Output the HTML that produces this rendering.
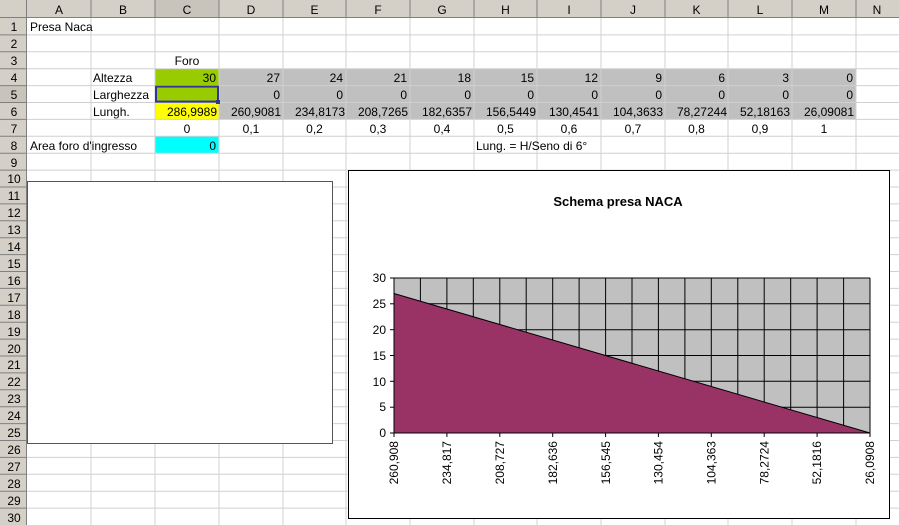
<!DOCTYPE html>
<html><head><meta charset="utf-8"><style>
html,body{margin:0;padding:0;background:#fff;width:899px;height:525px;overflow:hidden}
svg{display:block;font-family:"Liberation Sans",sans-serif;font-size:12px}
</style></head><body>
<svg width="899" height="525" xmlns="http://www.w3.org/2000/svg">
<rect width="899" height="525" fill="#fff"/>
<rect x="219" y="68.7" width="637" height="50.7" fill="#c0c0c0"/>
<rect x="155" y="68.7" width="64" height="33.8" fill="#99cc00"/>
<rect x="155" y="102.5" width="64" height="16.9" fill="#ffff00"/>
<rect x="155" y="136.3" width="64" height="16.9" fill="#00ffff"/>
<g stroke="#d0d0d0" stroke-width="1">
<line x1="27" y1="34.9" x2="899" y2="34.9"/><line x1="27" y1="51.8" x2="899" y2="51.8"/><line x1="27" y1="68.7" x2="899" y2="68.7"/><line x1="27" y1="85.6" x2="899" y2="85.6"/><line x1="27" y1="102.5" x2="899" y2="102.5"/><line x1="27" y1="119.4" x2="899" y2="119.4"/><line x1="27" y1="136.3" x2="899" y2="136.3"/><line x1="27" y1="153.2" x2="899" y2="153.2"/><line x1="27" y1="170.1" x2="899" y2="170.1"/><line x1="27" y1="187" x2="899" y2="187"/><line x1="27" y1="203.9" x2="899" y2="203.9"/><line x1="27" y1="220.8" x2="899" y2="220.8"/><line x1="27" y1="237.7" x2="899" y2="237.7"/><line x1="27" y1="254.6" x2="899" y2="254.6"/><line x1="27" y1="271.5" x2="899" y2="271.5"/><line x1="27" y1="288.4" x2="899" y2="288.4"/><line x1="27" y1="305.3" x2="899" y2="305.3"/><line x1="27" y1="322.2" x2="899" y2="322.2"/><line x1="27" y1="339.1" x2="899" y2="339.1"/><line x1="27" y1="356" x2="899" y2="356"/><line x1="27" y1="372.9" x2="899" y2="372.9"/><line x1="27" y1="389.8" x2="899" y2="389.8"/><line x1="27" y1="406.7" x2="899" y2="406.7"/><line x1="27" y1="423.6" x2="899" y2="423.6"/><line x1="27" y1="440.5" x2="899" y2="440.5"/><line x1="27" y1="457.4" x2="899" y2="457.4"/><line x1="27" y1="474.3" x2="899" y2="474.3"/><line x1="27" y1="491.2" x2="899" y2="491.2"/><line x1="27" y1="508.1" x2="899" y2="508.1"/>
<line x1="91" y1="18" x2="91" y2="525"/><line x1="155" y1="18" x2="155" y2="525"/><line x1="219" y1="18" x2="219" y2="525"/><line x1="283" y1="18" x2="283" y2="525"/><line x1="346" y1="18" x2="346" y2="525"/><line x1="410" y1="18" x2="410" y2="525"/><line x1="474" y1="18" x2="474" y2="525"/><line x1="537" y1="18" x2="537" y2="525"/><line x1="601" y1="18" x2="601" y2="525"/><line x1="665" y1="18" x2="665" y2="525"/><line x1="728" y1="18" x2="728" y2="525"/><line x1="792" y1="18" x2="792" y2="525"/><line x1="856" y1="18" x2="856" y2="525"/>
</g>
<rect x="0" y="0" width="899" height="18" fill="#d4d0c8"/>
<rect x="0" y="0" width="27" height="525" fill="#d4d0c8"/>
<rect x="155" y="0" width="64" height="18" fill="#c8c4bc"/>
<rect x="0" y="85.6" width="27" height="16.9" fill="#c8c4bc"/>
<g stroke="#808080" stroke-width="1">
<line x1="0" y1="17.5" x2="899" y2="17.5"/><line x1="26.5" y1="0" x2="26.5" y2="525"/>
<line x1="91" y1="0" x2="91" y2="18"/><line x1="155" y1="0" x2="155" y2="18"/><line x1="219" y1="0" x2="219" y2="18"/><line x1="283" y1="0" x2="283" y2="18"/><line x1="346" y1="0" x2="346" y2="18"/><line x1="410" y1="0" x2="410" y2="18"/><line x1="474" y1="0" x2="474" y2="18"/><line x1="537" y1="0" x2="537" y2="18"/><line x1="601" y1="0" x2="601" y2="18"/><line x1="665" y1="0" x2="665" y2="18"/><line x1="728" y1="0" x2="728" y2="18"/><line x1="792" y1="0" x2="792" y2="18"/><line x1="856" y1="0" x2="856" y2="18"/>
<line x1="0" y1="34.9" x2="27" y2="34.9"/><line x1="0" y1="51.8" x2="27" y2="51.8"/><line x1="0" y1="68.7" x2="27" y2="68.7"/><line x1="0" y1="85.6" x2="27" y2="85.6"/><line x1="0" y1="102.5" x2="27" y2="102.5"/><line x1="0" y1="119.4" x2="27" y2="119.4"/><line x1="0" y1="136.3" x2="27" y2="136.3"/><line x1="0" y1="153.2" x2="27" y2="153.2"/><line x1="0" y1="170.1" x2="27" y2="170.1"/><line x1="0" y1="187" x2="27" y2="187"/><line x1="0" y1="203.9" x2="27" y2="203.9"/><line x1="0" y1="220.8" x2="27" y2="220.8"/><line x1="0" y1="237.7" x2="27" y2="237.7"/><line x1="0" y1="254.6" x2="27" y2="254.6"/><line x1="0" y1="271.5" x2="27" y2="271.5"/><line x1="0" y1="288.4" x2="27" y2="288.4"/><line x1="0" y1="305.3" x2="27" y2="305.3"/><line x1="0" y1="322.2" x2="27" y2="322.2"/><line x1="0" y1="339.1" x2="27" y2="339.1"/><line x1="0" y1="356" x2="27" y2="356"/><line x1="0" y1="372.9" x2="27" y2="372.9"/><line x1="0" y1="389.8" x2="27" y2="389.8"/><line x1="0" y1="406.7" x2="27" y2="406.7"/><line x1="0" y1="423.6" x2="27" y2="423.6"/><line x1="0" y1="440.5" x2="27" y2="440.5"/><line x1="0" y1="457.4" x2="27" y2="457.4"/><line x1="0" y1="474.3" x2="27" y2="474.3"/><line x1="0" y1="491.2" x2="27" y2="491.2"/><line x1="0" y1="508.1" x2="27" y2="508.1"/>
</g>
<g fill="#000" text-anchor="middle">
<text x="59" y="14">A</text><text x="123" y="14">B</text><text x="187" y="14">C</text><text x="251" y="14">D</text><text x="314.5" y="14">E</text><text x="378" y="14">F</text><text x="442" y="14">G</text><text x="505.5" y="14">H</text><text x="569" y="14">I</text><text x="633" y="14">J</text><text x="696.5" y="14">K</text><text x="760" y="14">L</text><text x="824" y="14">M</text><text x="877" y="14">N</text>
<text x="14" y="31">1</text><text x="14" y="48">2</text><text x="14" y="65">3</text><text x="14" y="82">4</text><text x="14" y="99">5</text><text x="14" y="116">6</text><text x="14" y="133">7</text><text x="14" y="150">8</text><text x="14" y="167">9</text><text x="14" y="183">10</text><text x="14" y="200">11</text><text x="14" y="217">12</text><text x="14" y="234">13</text><text x="14" y="251">14</text><text x="14" y="268">15</text><text x="14" y="285">16</text><text x="14" y="302">17</text><text x="14" y="319">18</text><text x="14" y="336">19</text><text x="14" y="353">20</text><text x="14" y="369">21</text><text x="14" y="386">22</text><text x="14" y="403">23</text><text x="14" y="420">24</text><text x="14" y="437">25</text><text x="14" y="454">26</text><text x="14" y="471">27</text><text x="14" y="488">28</text><text x="14" y="505">29</text><text x="14" y="522">30</text>
</g>
<g fill="#000">
<text x="30" y="31">Presa Naca</text>
<text x="187" y="65" text-anchor="middle">Foro</text>
<text x="93" y="82">Altezza</text>
<text x="93" y="99">Larghezza</text>
<text x="93" y="116">Lungh.</text>
<text x="30" y="150">Area foro d'ingresso</text>
<text x="476" y="150">Lung. = H/Seno di 6°</text>
</g>
<g fill="#000" text-anchor="end">
<text x="216" y="82">30</text><text x="280" y="82">27</text><text x="343" y="82">24</text><text x="407" y="82">21</text><text x="471" y="82">18</text><text x="534" y="82">15</text><text x="598" y="82">12</text><text x="662" y="82">9</text><text x="725" y="82">6</text><text x="789" y="82">3</text><text x="853" y="82">0</text>
<text x="280" y="99">0</text><text x="343" y="99">0</text><text x="407" y="99">0</text><text x="471" y="99">0</text><text x="534" y="99">0</text><text x="598" y="99">0</text><text x="662" y="99">0</text><text x="725" y="99">0</text><text x="789" y="99">0</text><text x="853" y="99">0</text>
<text x="217" y="116">286,9989</text><text x="281" y="116">260,9081</text><text x="345" y="116">234,8173</text><text x="408" y="116">208,7265</text><text x="472" y="116">182,6357</text><text x="536" y="116">156,5449</text><text x="599" y="116">130,4541</text><text x="663" y="116">104,3633</text><text x="727" y="116">78,27244</text><text x="790" y="116">52,18163</text><text x="854" y="116">26,09081</text>
<text x="216" y="150">0</text>
</g>
<g fill="#000" text-anchor="middle">
<text x="187" y="133">0</text><text x="251" y="133">0,1</text><text x="314.5" y="133">0,2</text><text x="378" y="133">0,3</text><text x="442" y="133">0,4</text><text x="505.5" y="133">0,5</text><text x="569" y="133">0,6</text><text x="633" y="133">0,7</text><text x="696.5" y="133">0,8</text><text x="760" y="133">0,9</text><text x="824" y="133">1</text>
</g>
<rect x="156" y="86.6" width="62" height="15" fill="none" stroke="#333399" stroke-width="2"/>
<rect x="216" y="100" width="4" height="4" fill="#333399"/>
<rect x="27.5" y="181.5" width="305" height="262" fill="#fff" stroke="#555" stroke-width="1"/>
<rect x="348.5" y="170.5" width="541" height="348" fill="#fff" stroke="#000" stroke-width="1"/>
<text x="618" y="206" text-anchor="middle" font-weight="bold" font-size="13">Schema presa NACA</text>
<rect x="394" y="278" width="476" height="155" fill="#c0c0c0"/>
<g stroke="#000" stroke-width="1">
<line x1="394" y1="278" x2="870" y2="278"/><line x1="394" y1="303.8" x2="870" y2="303.8"/><line x1="394" y1="329.7" x2="870" y2="329.7"/><line x1="394" y1="355.5" x2="870" y2="355.5"/><line x1="394" y1="381.3" x2="870" y2="381.3"/><line x1="394" y1="407.2" x2="870" y2="407.2"/>
<line x1="420.4" y1="278" x2="420.4" y2="433"/><line x1="446.9" y1="278" x2="446.9" y2="433"/><line x1="473.3" y1="278" x2="473.3" y2="433"/><line x1="499.8" y1="278" x2="499.8" y2="433"/><line x1="526.2" y1="278" x2="526.2" y2="433"/><line x1="552.7" y1="278" x2="552.7" y2="433"/><line x1="579.1" y1="278" x2="579.1" y2="433"/><line x1="605.6" y1="278" x2="605.6" y2="433"/><line x1="632" y1="278" x2="632" y2="433"/><line x1="658.4" y1="278" x2="658.4" y2="433"/><line x1="684.9" y1="278" x2="684.9" y2="433"/><line x1="711.3" y1="278" x2="711.3" y2="433"/><line x1="737.8" y1="278" x2="737.8" y2="433"/><line x1="764.2" y1="278" x2="764.2" y2="433"/><line x1="790.7" y1="278" x2="790.7" y2="433"/><line x1="817.1" y1="278" x2="817.1" y2="433"/><line x1="843.6" y1="278" x2="843.6" y2="433"/><line x1="870" y1="278" x2="870" y2="433"/>
</g>
<polygon points="394,293.5 870,433 394,433" fill="#993366"/>
<line x1="394" y1="293.5" x2="870" y2="433" stroke="#000" stroke-width="1"/>
<g stroke="#000" stroke-width="1">
<line x1="394" y1="278" x2="394" y2="437"/><line x1="390" y1="433" x2="870" y2="433"/>
<line x1="390" y1="278" x2="394" y2="278"/><line x1="390" y1="303.8" x2="394" y2="303.8"/><line x1="390" y1="329.7" x2="394" y2="329.7"/><line x1="390" y1="355.5" x2="394" y2="355.5"/><line x1="390" y1="381.3" x2="394" y2="381.3"/><line x1="390" y1="407.2" x2="394" y2="407.2"/>
<line x1="446.9" y1="433" x2="446.9" y2="437"/><line x1="499.8" y1="433" x2="499.8" y2="437"/><line x1="552.7" y1="433" x2="552.7" y2="437"/><line x1="605.6" y1="433" x2="605.6" y2="437"/><line x1="658.4" y1="433" x2="658.4" y2="437"/><line x1="711.3" y1="433" x2="711.3" y2="437"/><line x1="764.2" y1="433" x2="764.2" y2="437"/><line x1="817.1" y1="433" x2="817.1" y2="437"/><line x1="870" y1="433" x2="870" y2="437"/>
</g>
<g fill="#000" text-anchor="end">
<text x="386" y="282">30</text><text x="386" y="308">25</text><text x="386" y="334">20</text><text x="386" y="360">15</text><text x="386" y="386">10</text><text x="386" y="411">5</text><text x="386" y="437">0</text>
</g>
<g fill="#000" text-anchor="end">
<text transform="translate(398,441) rotate(-90)">260,908</text>
<text transform="translate(451,441) rotate(-90)">234,817</text>
<text transform="translate(504,441) rotate(-90)">208,727</text>
<text transform="translate(557,441) rotate(-90)">182,636</text>
<text transform="translate(610,441) rotate(-90)">156,545</text>
<text transform="translate(662.5,441) rotate(-90)">130,454</text>
<text transform="translate(715.5,441) rotate(-90)">104,363</text>
<text transform="translate(768.5,441) rotate(-90)">78,2724</text>
<text transform="translate(821,441) rotate(-90)">52,1816</text>
<text transform="translate(874,441) rotate(-90)">26,0908</text>
</g>
</svg>
</body></html>
